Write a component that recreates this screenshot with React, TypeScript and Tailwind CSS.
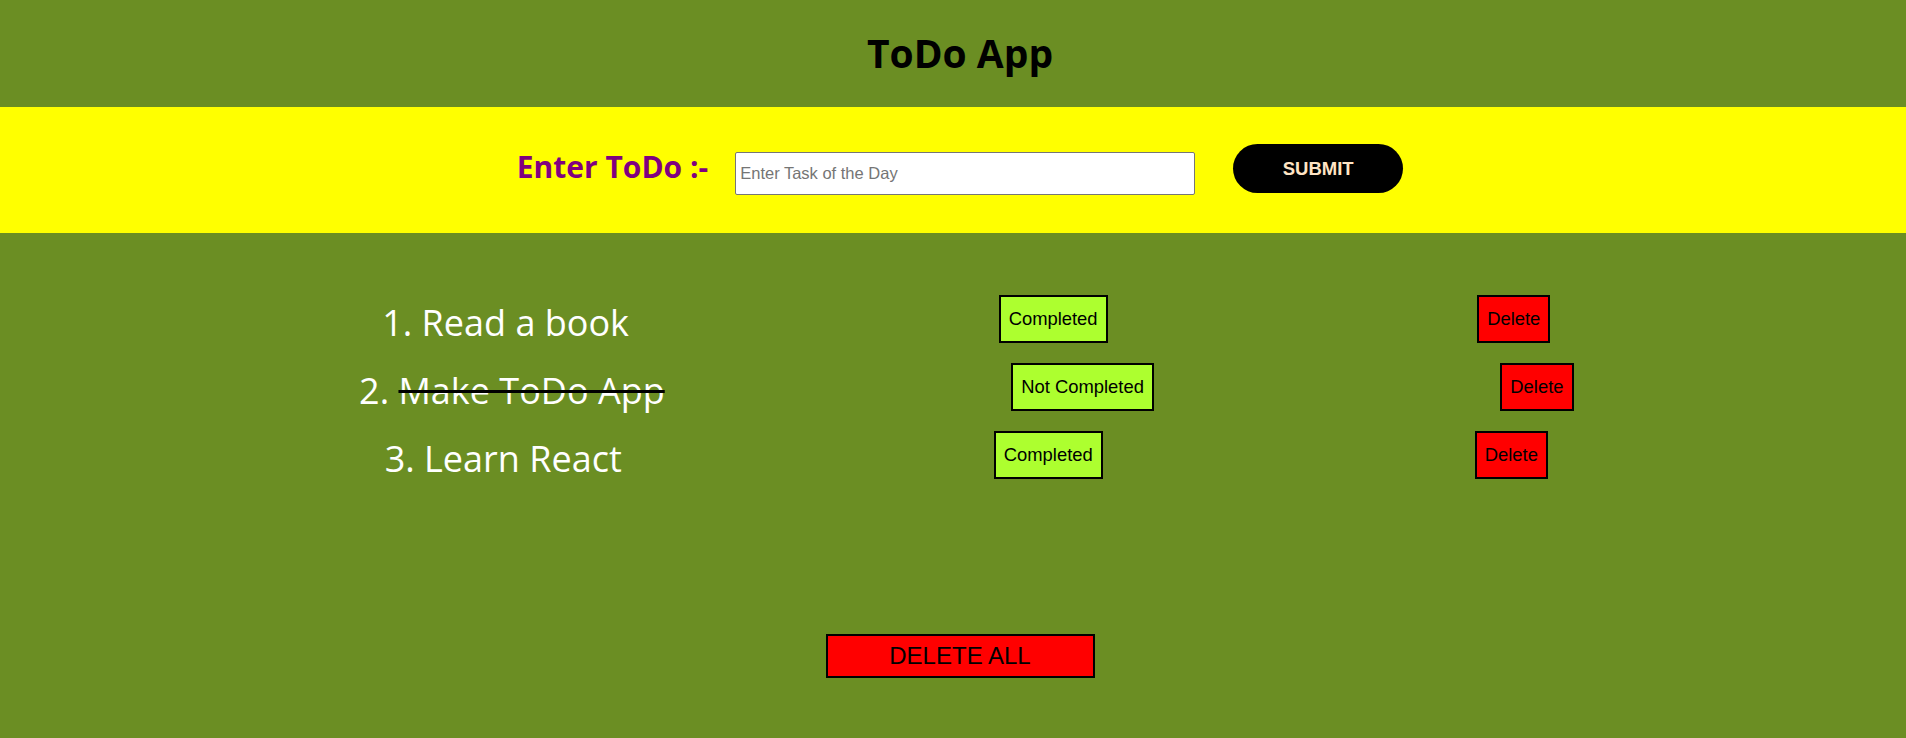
import React from 'react';

interface Todo {
  id: number;
  text: string;
  done: boolean;
}

const todos: Todo[] = [
  { id: 1, text: 'Read a book', done: false },
  { id: 2, text: 'Make ToDo App', done: true },
  { id: 3, text: 'Learn React', done: false },
];

function TodoRow({ todo }: { todo: Todo }) {
  return (
    <div className="flex h-[48px] w-[1868px] items-center justify-evenly">
      <li
        className={
          todo.done
            ? 'mt-[7px] text-[36px] leading-[48px] text-white line-through decoration-black decoration-[3px]'
            : 'mt-[7px] text-[36px] leading-[48px] text-white'
        }
      >
        {todo.text}
      </li>
      <button
        className="h-[48px] border-2 border-black bg-[#adff2f] px-[8px] font-['Liberation_Sans',Arial,sans-serif] text-[18.4px] text-black"
        type="button"
      >
        {todo.done ? 'Not Completed' : 'Completed'}
      </button>
      <button
        className="h-[48px] border-2 border-black bg-[#ff0000] px-[8px] font-['Liberation_Sans',Arial,sans-serif] text-[18.4px] text-black"
        type="button"
      >
        Delete
      </button>
    </div>
  );
}

export default function App() {
  return (
    <div className="w-full overflow-hidden">
      <div className="min-h-[738px] w-[1920px] bg-[#6b8e23] font-['Open_Sans','Noto_Sans',sans-serif]">
        <header className="flex h-[107px] items-center justify-center">
          <h1 className="text-[39px] font-bold text-black">ToDo App</h1>
        </header>

        <div className="flex h-[126px] items-start justify-center bg-[#ffff00]">
          <label className="mt-[37px] text-[30px] font-bold text-[#800080]" htmlFor="todo-input">
            Enter ToDo :-
          </label>
          <input
            className="ml-[27px] mt-[45px] h-[43px] w-[460px] rounded-[2px] border border-[#767676] bg-white px-[4px] font-['Liberation_Sans',Arial,sans-serif] text-[16.5px] text-black placeholder:text-[#757575]"
            id="todo-input"
            placeholder="Enter Task of the Day"
            type="text"
          />
          <button
            className="ml-[38px] mt-[37px] h-[49px] w-[170px] rounded-full bg-black font-['Liberation_Sans',Arial,sans-serif] text-[18.5px] font-bold text-[#ffe4c4]"
            type="button"
          >
            SUBMIT
          </button>
        </div>

        <ol className="flex list-decimal flex-col gap-[20px] pl-[52px] pt-[62px]">
          {todos.map((todo) => (
            <TodoRow key={todo.id} todo={todo} />
          ))}
        </ol>

        <div className="mt-[155px] flex justify-center">
          <button
            className="h-[44px] w-[269px] border-2 border-black bg-[#ff0000] font-['Liberation_Sans',Arial,sans-serif] text-[24px] text-black"
            type="button"
          >
            DELETE ALL
          </button>
        </div>
      </div>
    </div>
  );
}
